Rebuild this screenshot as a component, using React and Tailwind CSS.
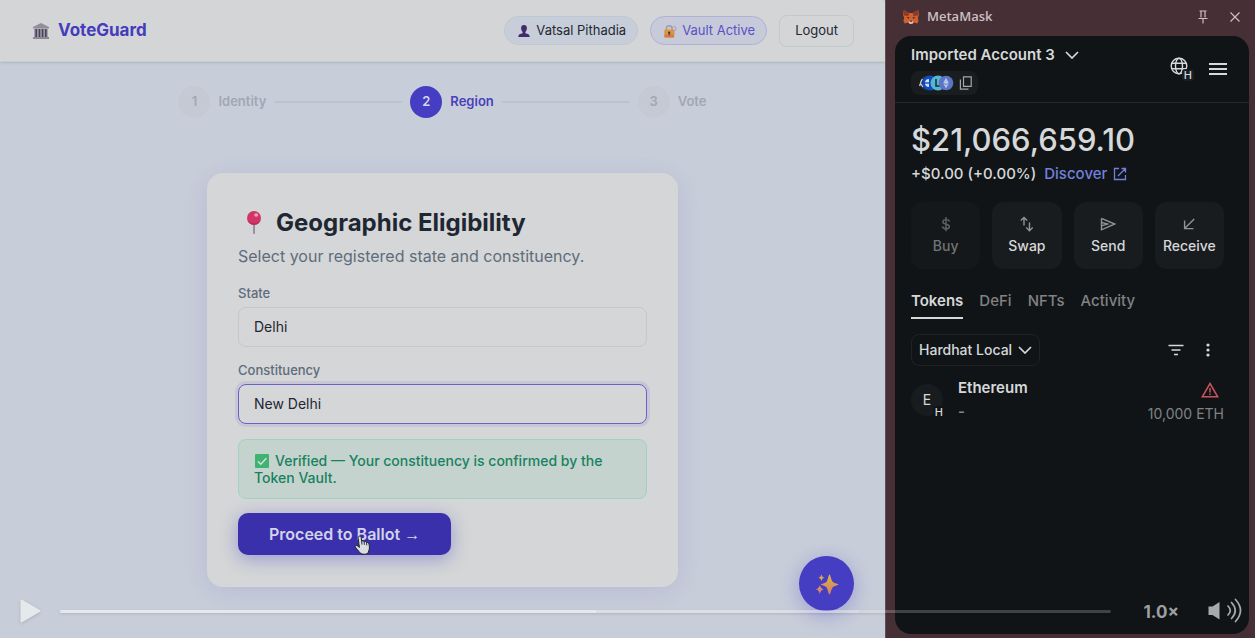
import React, { useState } from 'react';

const BankIcon = () => (
    <svg viewBox="0 0 18 18" className="w-[18px] h-[18px]" aria-hidden="true">
        <path d="M9 1 L17 5 V6.5 H1 V5 Z" fill="#928c9b" />
        <rect x="2" y="6.5" width="14" height="8.5" fill="#a7a2ae" />
        <rect x="3.4" y="7" width="1.7" height="8" fill="#4a4158" />
        <rect x="6.6" y="7" width="1.7" height="8" fill="#4a4158" />
        <rect x="9.7" y="7" width="1.7" height="8" fill="#4a4158" />
        <rect x="12.9" y="7" width="1.7" height="8" fill="#4a4158" />
        <rect x="1" y="15" width="16" height="2" fill="#8d8795" />
    </svg>
);

const PersonIcon = () => (
    <svg viewBox="0 0 14 14" className="w-3.5 h-3.5" aria-hidden="true">
        <path d="M7 1 C4.8 1 3.9 2.6 4.1 4.6 C4.2 6.2 4.9 7.4 5.6 8 V9.3 C3.2 9.7 1.2 10.5 1.2 13 H12.8 C12.8 10.5 10.8 9.7 8.4 9.3 V8 C9.1 7.4 9.8 6.2 9.9 4.6 C10.1 2.6 9.2 1 7 1 Z" fill="#432c6b" />
    </svg>
);

const LockIcon = () => (
    <svg viewBox="0 0 14 14" className="w-3.5 h-3.5" aria-hidden="true">
        <circle cx="11" cy="4.5" r="1.9" fill="none" stroke="#b3aac2" strokeWidth="1.4" />
        <path d="M11 6 V11" stroke="#b3aac2" strokeWidth="1.4" />
        <path d="M3.4 7 V4.4 C3.4 0.8 8.9 0.8 8.9 4.4 V7" fill="none" stroke="#a19ba8" strokeWidth="1.4" />
        <rect x="1.3" y="5.6" width="9.8" height="7.8" rx="1.2" fill="#d9963a" />
        <rect x="1.3" y="10.5" width="9.8" height="2.9" rx="1.2" fill="#d27e43" />
        <circle cx="6.2" cy="8.7" r="1.1" fill="#40303d" />
        <path d="M6.2 9 V11.4" stroke="#40303d" strokeWidth="1" />
    </svg>
);

const PushpinIcon = () => (
    <svg viewBox="0 0 16 26" className="w-4 h-[26px]" aria-hidden="true">
        <rect x="7.2" y="13" width="1.7" height="11" rx="0.8" fill="#8f8499" />
        <circle cx="8" cy="8" r="7" fill="#d33466" />
        <path d="M1.6 10.5 A7 7 0 0 0 14.5 10.5 A9 9 0 0 1 1.6 10.5" fill="#b62a62" />
        <ellipse cx="10.2" cy="5" rx="2" ry="1.7" fill="#e6a2b8" />
    </svg>
);

const CheckIcon = () => (
    <svg viewBox="0 0 14 14" className="inline w-3.5 h-3.5 mx-px mr-1.5 align-[-2px]" aria-hidden="true">
        <rect width="14" height="14" rx="1" fill="#41b370" />
        <path d="M3 7.4 L5.8 10.2 L11.4 4.2" fill="none" stroke="#d5dfd9" strokeWidth="1.5" />
    </svg>
);

const SparklesIcon = () => (
    <svg viewBox="0 0 24 24" className="w-6 h-6" aria-hidden="true">
        <defs>
            <linearGradient id="spark" x1="0" y1="0" x2="0" y2="1">
                <stop offset="0" stopColor="#dcb24e" />
                <stop offset="1" stopColor="#d5805c" />
            </linearGradient>
        </defs>
        <path d="M14.5 2.5 C15.4 2.5 16 7.6 17.6 9.8 C19.4 11.4 23.5 11.8 23.5 12.6 C23.5 13.4 19.4 13.8 17.6 15.4 C16 17.6 15.4 22.5 14.5 22.5 C13.6 22.5 13 17.6 11.6 15.4 C10 13.8 6 13.4 6 12.6 C6 11.8 10 11.4 11.6 9.8 C13 7.6 13.6 2.5 14.5 2.5 Z" fill="url(#spark)" />
        <path d="M6.4 2.5 Q7 5.1 9.4 5.7 Q7 6.3 6.4 9 Q5.8 6.3 3.4 5.7 Q5.8 5.1 6.4 2.5 Z" fill="#d9a154" />
        <path d="M4.8 13 Q5.6 16.4 8.8 17.2 Q5.6 18 4.8 22 Q4 18 0.8 17.2 Q4 16.4 4.8 13 Z" fill="#d68a6a" />
    </svg>
);

const FoxIcon = () => (
    <svg viewBox="0 0 16 16" className="w-4 h-4" aria-hidden="true">
        <path d="M0.8 1 L6 4 H10 L15.2 1 L15.8 6 L14.8 9 L15.6 12 L14.2 14.6 L11 13.6 L9.4 15 H6.6 L5 13.6 L1.8 14.6 L0.4 12 L1.2 9 L0.2 6 Z" fill="#d2602e" />
        <path d="M0.8 1 L6.2 4.6 L5.3 7 L1 6.4 Z M15.2 1 L9.8 4.6 L10.7 7 L15 6.4 Z" fill="#8c3b26" />
        <path d="M3.4 8.6 L6.2 8 L6 9.8 Z M12.6 8.6 L9.8 8 L10 9.8 Z" fill="#33262c" />
        <path d="M5.4 12.2 H10.6 L9.4 14.8 H6.6 Z" fill="#d3cac5" />
        <path d="M6.8 11.8 H9.2 L9 12.8 H7 Z" fill="#33262c" />
    </svg>
);

const HandCursor = () => (
    <svg viewBox="0 0 17 20" className="w-[17px] h-5" aria-hidden="true">
        <path d="M4.6 1.6 C5.6 0.6 7 1.2 7.2 2.4 L7.7 6.4 C8.5 5.5 9.8 5.7 10.1 6.8 C11 6.2 12.2 6.5 12.5 7.6 C13.6 7.2 14.8 7.7 15 9 C15.4 11 15.8 13.4 14.8 15.8 L13.8 18.4 C11.6 19.6 8.4 19.6 6.4 18.2 C4.6 16 2.4 13.6 1.2 11.8 C0.8 10.6 2.4 9.8 3.8 11 L5.4 12.4 L4.2 3.4 C4.1 2.6 4.2 2 4.6 1.6 Z" fill="#dcdde0" stroke="#20202a" strokeWidth="1" />
        <path d="M7.7 6.4 L8 9.6 M10.1 6.8 L10.4 9.8 M12.5 7.8 L12.8 10.4" stroke="#20202a" strokeWidth="0.9" fill="none" />
    </svg>
);

const ChevronDown = () => (
    <svg viewBox="0 0 14 8" className="w-3.5 h-2" fill="none" stroke="currentColor" strokeWidth="1.7" aria-hidden="true">
        <path d="M1 1 L7 7 L13 1" />
    </svg>
);

const steps = [
    { id: 1, label: 'Identity' },
    { id: 2, label: 'Region' },
    { id: 3, label: 'Vote' },
];

const Stepper = ({ current }) => (
    <ol className="flex items-center justify-center gap-2 pt-6">
        {steps.map((step) => (
            <React.Fragment key={step.id}>
                {step.id > 1 && <li aria-hidden="true" className="w-32 h-0.5 rounded bg-[#bcc3d0]" />}
                <li className={`flex items-center gap-2 text-[13px] font-semibold ${step.id === current ? 'text-[#4a40bb]' : 'text-[#a1a7b6]'}`}>
                    <span className={`flex items-center justify-center w-8 h-8 rounded-full ${step.id === current ? 'bg-[#453dc2] text-[#d5d7e6]' : 'bg-[#c4c9d4]'}`}>
                        {step.id}
                    </span>
                    {step.label}
                </li>
            </React.Fragment>
        ))}
    </ol>
);

const VoteGuard = () => {
    const [state, setState] = useState('Delhi');
    const [constituency, setConstituency] = useState('New Delhi');

    return (
        <div className="relative flex-1 min-w-0 bg-[#c8ced9] text-[#1e2732]">
            {/* Top bar */}
            <header className="flex items-center justify-between h-[62px] pl-8 pr-[31px] rounded-tr bg-[#d4d5d6] border-b border-[#c6cdcb] shadow-sm shadow-slate-500/20">
                <div className="flex items-center gap-2 text-[17px] font-bold text-[#443cbd]">
                    <BankIcon />
                    <span>VoteGuard</span>
                </div>
                <div className="flex items-center gap-3 text-[13px]">
                    <span className="flex items-center gap-[5px] h-[29px] pl-3 pr-[11px] rounded-full bg-[#c8ced9] border border-[#bec8d2]">
                        <PersonIcon />
                        Vatsal Pithadia
                    </span>
                    <span className="flex items-center gap-[5px] h-[29px] pl-3 pr-[11px] rounded-full bg-[#c7cad9] border border-[#b0b1d8] text-[#5b50c6]">
                        <LockIcon />
                        Vault Active
                    </span>
                    <button className="h-8 px-[15px] rounded-lg border border-[#c1cacd] text-[13px]">Logout</button>
                </div>
            </header>

            <Stepper current={2} />

            {/* Region form */}
            <form className="w-[471px] max-w-full mx-auto mt-[55px] px-[31px] py-8 rounded-2xl bg-[#d4d6d7] shadow-[0_4px_28px_rgba(80,70,190,0.14)]" onSubmit={(e) => e.preventDefault()}>
                <h1 className="flex items-center gap-3.5 pl-2 text-2xl leading-9 font-bold">
                    <PushpinIcon />
                    Geographic Eligibility
                </h1>
                <p className="mt-[3px] text-base text-[#5f6c7b]">Select your registered state and constituency.</p>
                <label htmlFor="state" className="block mt-[15px] mb-1 text-[13px] leading-5 font-medium text-[#5f6c7b]">State</label>
                <select
                    id="state"
                    value={state}
                    onChange={(e) => setState(e.target.value)}
                    className="block w-full h-10 px-[15px] appearance-none rounded-lg border border-[#c0cacc] bg-[#d4d6d7] text-sm"
                >
                    <option>Delhi</option>
                </select>
                <label htmlFor="constituency" className="block mt-[13px] mb-1 text-[13px] leading-5 font-medium text-[#5f6c7b]">Constituency</label>
                <select
                    id="constituency"
                    value={constituency}
                    onChange={(e) => setConstituency(e.target.value)}
                    className="block w-full h-10 px-[15px] appearance-none rounded-lg border border-[#6b60c6] bg-[#d4d6d7] text-sm ring-3 ring-[#c7c5d6]"
                >
                    <option>New Delhi</option>
                </select>
                <p className="mt-[15px] px-[15px] py-3 rounded-lg border border-[#9fd3bf] bg-[#c4d3cd] text-sm leading-[17px] font-medium text-[#178260]">
                    <CheckIcon />Verified — Your constituency is confirmed by the Token Vault.
                </p>
                <button className="relative h-[42px] mt-3.5 px-[31px] rounded-[10px] bg-[#3a30ab] text-[#d3d3e8] text-base font-semibold shadow-[0_4px_18px_rgba(70,60,200,0.4)]">
                    Proceed to Ballot <span className="font-['Liberation_Sans'] font-normal">→</span>
                    <span className="absolute left-[116px] top-[22px]"><HandCursor /></span>
                </button>
            </form>

            <button aria-label="Assistant" className="absolute right-[31px] bottom-[27px] flex items-center justify-center w-[55px] h-[55px] rounded-full bg-[#453dc2] shadow-[0_4px_20px_rgba(70,60,200,0.35)]">
                <SparklesIcon />
            </button>
        </div>
    );
};

const actions = [
    {
        label: 'Buy',
        disabled: true,
        icon: <path d="M11.5 5.5 C11 4 9.8 3.6 8 3.6 C6 3.6 4.8 4.6 4.8 6 C4.8 9 11.4 7.2 11.4 10.4 C11.4 12 10 12.8 8 12.8 C6 12.8 4.8 12 4.4 10.5 M8 1 V15.2" />,
    },
    {
        label: 'Swap',
        icon: <path d="M5 9.5 V1.5 M1.8 4.6 L5 1.4 L8.2 4.6 M10.5 6.5 V15 M7.3 11.6 L10.5 14.8 L13.7 11.6" />,
    },
    {
        label: 'Send',
        icon: <path d="M1.5 2.4 L14.8 8 L1.5 13.8 V2.4 M1.5 6.4 L7.4 8 L1.5 9.8" />,
    },
    {
        label: 'Receive',
        icon: <path d="M13.2 3 L3.6 12.6 M3.6 4.5 V12.6 H12.4" />,
    },
];

const tabs = ['Tokens', 'DeFi', 'NFTs', 'Activity'];

const Wallet = () => {
    const [activeTab, setActiveTab] = useState('Tokens');

    return (
        <aside className="flex flex-col w-[370px] shrink-0 border-l border-[#5a5055] bg-[#462f35] pl-[9px] pr-1.5 pb-1">
            {/* Side panel title */}
            <div className="flex items-center h-9 pb-0.5 px-2 text-[#cbbfc3]">
                <FoxIcon />
                <span className="ml-2 font-['Open_Sans'] text-[13px] font-semibold">MetaMask</span>
                <button aria-label="Pin" className="ml-auto">
                    <svg viewBox="0 0 12 14" className="w-3 h-3.5" fill="none" stroke="currentColor" strokeWidth="1.2">
                        <path d="M2.5 1 H9.5 M4 1 V7.5 M8 1 V7.5 M1.5 8.5 H10.5 M6 8.5 V13.5" />
                    </svg>
                </button>
                <button aria-label="Close" className="ml-5">
                    <svg viewBox="0 0 12 12" className="w-3 h-3" fill="none" stroke="currentColor" strokeWidth="1.2">
                        <path d="M1.5 1.5 L10.5 10.5 M10.5 1.5 L1.5 10.5" />
                    </svg>
                </button>
            </div>

            <div className="flex-1 rounded-2xl bg-[#111416] text-[#d6d8d9]">
                {/* Account */}
                <div className="flex items-center justify-between h-[67px] pl-4 pr-[22px] border-b border-[#25282b]">
                    <div>
                        <button className="flex items-center gap-2.5 h-6 text-[15px] font-semibold">
                            Imported Account 3
                            <ChevronDown />
                        </button>
                        <div className="flex items-center w-fit h-6 mt-1 pl-1 pr-[5px] rounded-lg bg-[#1a1d1f]">
                            <svg viewBox="0 0 58 16" className="w-[58px] h-4" aria-hidden="true">
                                <circle cx="12" cy="8" r="7" fill="#26384b" />
                                <path d="M4.6 11 L6.2 6 L7.5 4 M6 9 L8 12" stroke="#c9d2d8" strokeWidth="1.3" fill="none" />
                                <circle cx="15" cy="8" r="7.5" fill="#114ac6" />
                                <path d="M14 4 A4 4 0 0 0 14 12" fill="#d6dfea" />
                                <path d="M10 8 H14" stroke="#114ac6" strokeWidth="1.4" />
                                <circle cx="23" cy="8" r="7.5" fill="#53b7ce" />
                                <path d="M21 4 V11 H25" stroke="#172e3b" strokeWidth="1.5" fill="none" />
                                <circle cx="31" cy="8" r="7.3" fill="#5b74c6" />
                                <path d="M31 2.8 L34 8.2 L31 13.2 L28 8.2 Z" fill="#b9c5e4" />
                                <path d="M28 8.2 L31 9.5 L34 8.2" stroke="#5b74c6" strokeWidth="0.8" fill="none" />
                                <path d="M48.5 1.8 H56.2 V11.4 H48.5 Z M45.4 4.5 V14.2 H53.5" stroke="#a4a7a9" strokeWidth="1.2" fill="none" />
                            </svg>
                        </div>
                    </div>
                    <div className="flex items-center gap-5">
                        <button aria-label="Network" className="relative mr-px">
                            <svg viewBox="0 0 18 18" className="w-[18px] h-[18px] mb-1.5" fill="none" stroke="currentColor" strokeWidth="1.4">
                                <circle cx="9" cy="9" r="7.8" />
                                <ellipse cx="9" cy="9" rx="3.5" ry="7.8" />
                                <path d="M2 6.3 H16 M2 11.7 H16" />
                            </svg>
                            <span className="absolute -right-1.5 bottom-0 px-0.5 rounded-sm bg-[#182024] text-[11px] leading-3 font-medium">H</span>
                        </button>
                        <button aria-label="Menu" className="flex flex-col gap-[3px]">
                            <span className="w-[18px] h-0.5 bg-current" />
                            <span className="w-[18px] h-0.5 bg-current" />
                            <span className="w-[18px] h-0.5 bg-current" />
                        </button>
                    </div>
                </div>

                {/* Balance */}
                <div className="pl-4 pr-[25px] pt-4">
                    <div className="text-[31px] leading-[42px] font-medium">$21,066,659.10</div>
                    <div className="flex items-center gap-2 mt-px text-[15px] leading-6 font-medium">
                        <span>+$0.00 (+0.00%)</span>
                        <a href="#discover" className="flex items-center gap-1.5 text-[#7180dc]">
                            Discover
                            <svg viewBox="0 0 14 14" className="w-3.5 h-3.5" fill="none" stroke="currentColor" strokeWidth="1.3">
                                <path d="M6 1.5 H1.5 V12.5 H12.5 V8 M8.5 1.5 H12.5 V5.5 M12.5 1.5 L5 9" />
                            </svg>
                        </a>
                    </div>

                    <div className="grid grid-cols-4 gap-3 mt-4">
                        {actions.map((action) => (
                            <button
                                key={action.label}
                                disabled={action.disabled}
                                className="flex flex-col items-center gap-1 h-[67px] pt-3.5 rounded-xl bg-[#191c1e] text-sm font-medium disabled:bg-[#15181a] disabled:text-[#727476]"
                            >
                                <svg viewBox="0 0 16 16" className="w-4 h-4 text-[#919395]" fill="none" stroke="currentColor" strokeWidth="1.4" opacity={action.disabled ? 0.6 : 1}>
                                    {action.icon}
                                </svg>
                                {action.label}
                            </button>
                        ))}
                    </div>

                    <div className="flex gap-4 mt-[21px] text-[15px] font-medium" role="tablist">
                        {tabs.map((tab) => (
                            <button
                                key={tab}
                                role="tab"
                                aria-selected={tab === activeTab}
                                onClick={() => setActiveTab(tab)}
                                className={`h-[29px] pb-1 border-b-2 ${tab === activeTab ? 'border-[#d6d8d9] font-semibold' : 'border-transparent text-[#808284]'}`}
                            >
                                {tab}
                            </button>
                        ))}
                    </div>

                    {/* Token filter */}
                    <div className="flex items-center mt-[15px]">
                        <button className="flex items-center gap-1.5 h-8 px-[7px] rounded-lg border border-[#202326] text-sm font-medium">
                            Hardhat Local
                            <ChevronDown />
                        </button>
                        <button aria-label="Sort" className="ml-auto">
                            <svg viewBox="0 0 16 12" className="w-4 h-3" stroke="currentColor" strokeWidth="1.6">
                                <path d="M0.5 1.5 H15.5 M3.5 6 H12.5 M6 10.5 H10" />
                            </svg>
                        </button>
                        <button aria-label="More" className="ml-[17px] mr-[9px]">
                            <svg viewBox="0 0 14 14" className="w-3.5 h-3.5" fill="currentColor">
                                <circle cx="7" cy="2" r="1.6" />
                                <circle cx="7" cy="7" r="1.6" />
                                <circle cx="7" cy="12" r="1.6" />
                            </svg>
                        </button>
                    </div>

                    <div className="flex mt-2.5">
                        <div className="relative flex items-center justify-center w-8 h-8 mt-2 rounded-full bg-[#191c1e] text-sm">
                            E
                            <span className="absolute -right-0.5 -bottom-0.5 px-0.5 rounded-sm bg-[#111416] text-[11px] leading-3 font-medium">H</span>
                        </div>
                        <div className="ml-[15px] text-[15px] leading-6 font-semibold">
                            <div>Ethereum</div>
                            <div className="text-[#808284]">-</div>
                        </div>
                        <div className="ml-auto flex flex-col items-end text-sm leading-6 text-[#808284]">
                            <svg viewBox="0 0 18 16" className="w-[18px] h-4 mt-1.5 mb-1 mr-[5px]" fill="none" stroke="#cb5360" strokeWidth="1.5">
                                <path d="M9 1.5 L16.7 14.8 H1.3 Z M9 6 V10.5 M9 11.6 V13" />
                            </svg>
                            10,000 ETH
                        </div>
                    </div>
                </div>
            </div>
        </aside>
    );
};

const PlayerControls = () => (
    <div className="absolute inset-x-0 bottom-0 flex items-center h-[54px] pl-5 pr-3">
        <button aria-label="Play">
            <svg viewBox="0 0 21 24" className="w-[21px] h-6 drop-shadow">
                <path d="M1.5 1.5 L19.5 12 L1.5 22.5 Z" fill="#e4e9ec" stroke="#e4e9ec" strokeWidth="2" strokeLinejoin="round" />
            </svg>
        </button>
        <div className="flex flex-1 h-[3px] ml-[19px] rounded-full overflow-hidden shadow-sm">
            <div className="w-[51%] bg-[#e4e9ec]" />
            <div className="w-[25%] bg-white/35" />
            <div className="flex-1 bg-white/20" />
        </div>
        <button aria-label="Playback speed" className="ml-8 pt-1 text-[17px] font-bold text-[#9d9fa1]">1.0×</button>
        <button aria-label="Volume" className="ml-7">
            <svg viewBox="0 0 36 26" className="w-9 h-[26px]" fill="none" stroke="#a7a9ab" strokeWidth="1.7" strokeLinecap="round">
                <path d="M1.5 8.5 H5.5 L12.5 4 V21.5 L5.5 17 H1.5 Z" fill="#a7a9ab" stroke="none" />
                <path d="M21 8 Q25.5 12.5 21 17 M24.5 4.5 Q32 12.5 24.5 20.5 M28.5 1.5 Q38.5 12.5 28.5 23.5" />
            </svg>
        </button>
    </div>
);

const App = () => (
    <div className="relative flex min-h-screen font-['Inter',sans-serif]">
        <VoteGuard />
        <Wallet />
        <PlayerControls />
    </div>
);

export default App;
